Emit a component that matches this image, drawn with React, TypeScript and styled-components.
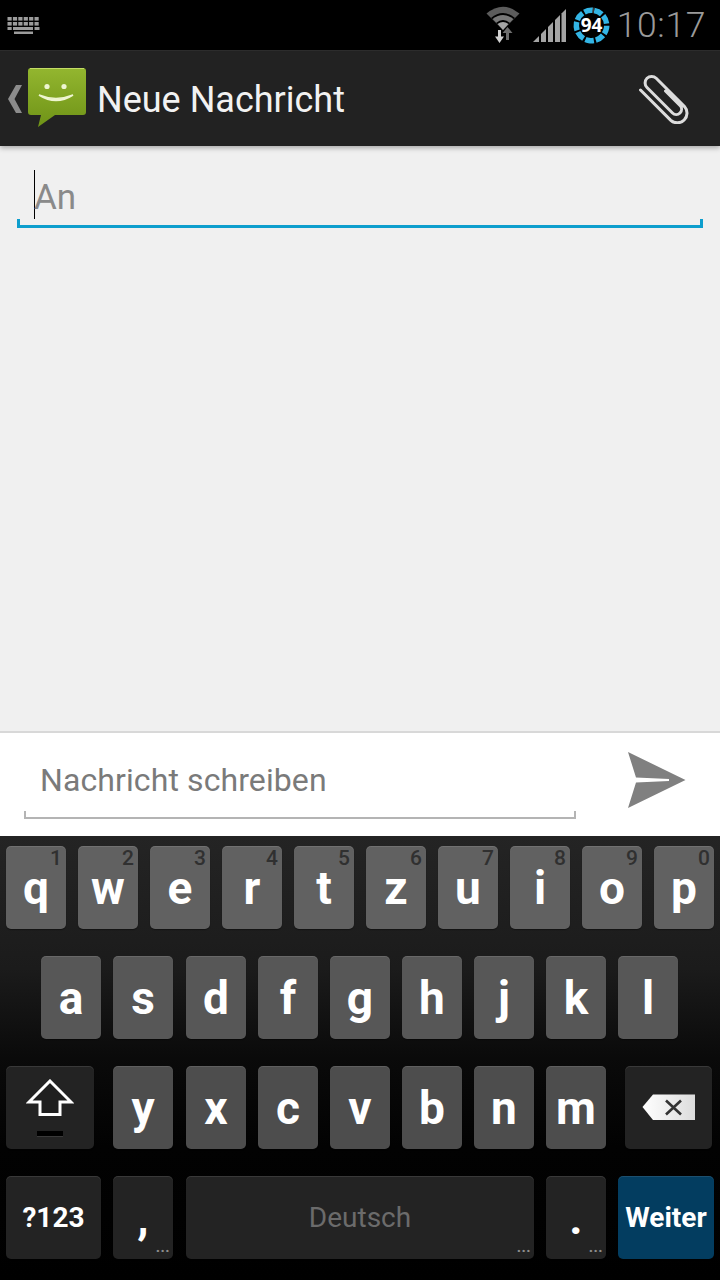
import { styled, createGlobalStyle } from 'styled-components';

type KeyKind = 'letter' | 'dark' | 'action';

const rowOne = [
	['q', '1'],
	['w', '2'],
	['e', '3'],
	['r', '4'],
	['t', '5'],
	['z', '6'],
	['u', '7'],
	['i', '8'],
	['o', '9'],
	['p', '0'],
];
const rowTwo = ['a', 's', 'd', 'f', 'g', 'h', 'j', 'k', 'l'];
const rowThree = ['y', 'x', 'c', 'v', 'b', 'n', 'm'];

function KeyboardIcon() {
	const top = [0, 1, 2, 3, 4, 5];
	return (
		<svg width="33" height="17" viewBox="0 0 33 17" fill="#9c9c9c">
			{top.map((i) => (
				<rect key={i} x={0.5 + i * 5.4} y="0" width="4.2" height="3.6" />
			))}
			{top.map((i) => (
				<rect key={i} x={0.5 + i * 5.4} y="5" width="4.2" height="3.6" />
			))}
			<rect x="0.5" y="10" width="4.2" height="3" />
			<rect x="6" y="10" width="20" height="3" />
			<rect x="27.5" y="10" width="5" height="3" />
			<rect x="7" y="14.5" width="19" height="2.5" />
		</svg>
	);
}

function WifiIcon() {
	return (
		<svg width="40" height="38" viewBox="0 0 40 38">
			<path d="M0.5 7.5 Q17 -6 33.5 7.5 L17 24 Z" fill="#5c5c5c" />
			<path d="M5 12 Q17 2 29 12 L17 24 Z" fill="#000" />
			<path d="M6.5 13 Q17 5 27.5 13 L17 24 Z" fill="#787878" />
			<path d="M10 17 Q17 11 24 17 L17 24 Z" fill="#000" />
			<path d="M11.5 18 Q17 14 22.5 18 L17 24 Z" fill="#a6a6a6" />
			<path d="M9 30.5 H12 V24 H15 V30.5 H18 L13.5 37 Z" fill="#d0d0d0" />
			<path d="M16.5 27 L21.5 21 L26.5 27 H23 V34 H20 V27 Z" fill="#6e6e6e" />
		</svg>
	);
}

function SignalIcon() {
	return (
		<svg width="33" height="33" viewBox="0 0 33 33" fill="#a4a4a4">
			<path d="M0 33 L6 27 V33 Z" />
			<path d="M8 25 L13 20 V33 H8 Z" />
			<path d="M15 18 L20 13 V33 H15 Z" />
			<path d="M22 11 L27 6 V33 H22 Z" />
			<path d="M28.5 4.5 L33 0 V33 H28.5 Z" />
		</svg>
	);
}

function BatteryRing() {
	const size = 37;
	const radius = 15.2;
	const length = 2 * Math.PI * radius;
	const part = length / 9;
	return (
		<svg width={size} height={size} viewBox="0 0 37 37">
			<g transform="rotate(-80 18.5 18.5)" fill="none" strokeWidth="5.5">
				<circle cx="18.5" cy="18.5" r={radius} stroke="#33b5e5" strokeDasharray={`${part - 2} 2`} />
				<circle
					cx="18.5"
					cy="18.5"
					r={radius}
					stroke="#3a3a3a"
					strokeDasharray={`${part * 0.55} ${length}`}
					strokeDashoffset={part * 0.76}
				/>
			</g>
			<text
				x="18.5"
				y="25.2"
				textAnchor="middle"
				fill="#fff"
				fontFamily="'Open Sans', sans-serif"
				fontWeight="700"
				fontSize="19"
			>
				94
			</text>
		</svg>
	);
}

function BackChevron() {
	return (
		<svg width="20" height="30" viewBox="0 0 20 30">
			<path d="M8 1 H14 L6.5 15 L14 29 H8 L0 15 Z" fill="#8c8c8c" />
		</svg>
	);
}

function MessagingLogo() {
	return (
		<svg width="60" height="62" viewBox="1 1 60 62">
			<defs>
				<linearGradient id="bubble" x1="0" y1="0" x2="0" y2="1">
					<stop offset="0" stopColor="#93b62f" />
					<stop offset="1" stopColor="#6f9317" />
				</linearGradient>
			</defs>
			<path
				d="M4 1 H56 Q59 1 59 4 V45 Q59 48 56 48 H28 L11 60 L14 48 H4 Q1 48 1 45 V4 Q1 1 4 1 Z"
				fill="url(#bubble)"
			/>
			<path d="M3 1.5 H57" stroke="#c4dc66" strokeWidth="1" />
			<circle cx="20" cy="19.5" r="2.6" fill="#eef5d0" />
			<circle cx="37" cy="19.5" r="2.6" fill="#eef5d0" />
			<path d="M12 28 Q29 39 46 28 Q29 35 12 28 Z" fill="#eef5d0" stroke="#eef5d0" strokeWidth="1.6" />
		</svg>
	);
}

function PaperclipIcon() {
	return (
		<svg width="54" height="50" viewBox="0 0 54 50">
			<path
				d="M29.5 17 L44 31.5 A5.3 5.3 0 0 1 36.5 39 L11 13.5 A6.5 6.5 0 0 1 20.2 4.3 L48.5 32.6 A9.7 9.7 0 0 1 34.8 46.3 L4.5 16"
				fill="none"
				stroke="#dcdcdc"
				strokeWidth="3"
				strokeLinecap="round"
			/>
		</svg>
	);
}

function SendIcon() {
	return (
		<svg width="58" height="56" viewBox="0 0 58 56">
			<path d="M0 0 L57.5 28 L0 56 L8 30.4 L41 29 V27 L8 25.6 Z" fill="#808080" />
		</svg>
	);
}

function ShiftIcon() {
	return (
		<svg width="48" height="58" viewBox="0 0 48 58">
			<path d="M24 2 L45 23 H34 V35.5 H14 V23 H3 Z" fill="#1f1f1f" stroke="#fff" strokeWidth="3" />
			<rect x="11" y="52" width="26" height="5" fill="#000" />
			<rect x="11" y="57" width="26" height="1" fill="#3a3a3a" />
		</svg>
	);
}

function DeleteIcon() {
	return (
		<svg width="54" height="27" viewBox="0 0 54 27">
			<defs>
				<linearGradient id="delete" x1="0" y1="0" x2="1" y2="0">
					<stop offset="0" stopColor="#ffffff" />
					<stop offset="1" stopColor="#dcdcdc" />
				</linearGradient>
			</defs>
			<path d="M0.5 13 L11 0.5 H53 V26 H11 Z" fill="url(#delete)" />
			<path d="M24 6.5 L39 20.5 M39 6.5 L24 20.5" stroke="#333" strokeWidth="2.6" />
		</svg>
	);
}

export default function App() {
	return (
		<>
			<GlobalStyle />
			<Screen>
				<StatusBar>
					<KeyboardIcon />
					<StatusRight>
						<WifiIcon />
						<SignalIcon />
						<BatteryRing />
						<Clock>10:17</Clock>
					</StatusRight>
				</StatusBar>
				<ActionBar>
					<BackChevron />
					<MessagingLogo />
					<Title>Neue Nachricht</Title>
					<PaperclipIcon />
				</ActionBar>
				<Recipients>
					<RecipientField>
						<Caret />
						<Placeholder>An</Placeholder>
					</RecipientField>
				</Recipients>
				<Composer>
					<MessageField>Nachricht schreiben</MessageField>
					<SendIcon />
				</Composer>
				<Keyboard>
					<KeyRow>
						{rowOne.map(([letter, hint]) => (
							<Key key={letter} $shade="#616161">
								{letter}
								<Hint>{hint}</Hint>
							</Key>
						))}
					</KeyRow>
					<OffsetRow>
						{rowTwo.map((letter) => (
							<Key key={letter} $shade="#575757">
								{letter}
							</Key>
						))}
					</OffsetRow>
					<KeyRow>
						<Key $width={88} $kind="dark" $after={7}>
							<ShiftIcon />
						</Key>
						{rowThree.map((letter) => (
							<Key key={letter} $shade="#4d4d4d" $after={letter === 'y' ? 1 : letter === 'm' ? 7 : 0}>
								{letter}
							</Key>
						))}
						<Key $width={87} $kind="dark">
							<DeleteIcon />
						</Key>
					</KeyRow>
					<KeyRow>
						<Key $width={95} $kind="dark">
							<SmallLabel>?123</SmallLabel>
						</Key>
						<Key $kind="dark" $after={1}>
							,<Dots>...</Dots>
						</Key>
						<SpaceKey $width={348} $kind="dark">
							Deutsch
							<Dots>...</Dots>
						</SpaceKey>
						<Key $kind="dark">
							.<Dots>...</Dots>
						</Key>
						<Key $width={96} $kind="action">
							<SmallLabel>Weiter</SmallLabel>
						</Key>
					</KeyRow>
				</Keyboard>
			</Screen>
		</>
	);
}

const GlobalStyle = createGlobalStyle`
	html, body {
		margin: 0;
		padding: 0;
		background: #000;
	}
`;

const Screen = styled.div`
	width: 720px;
	height: 1280px;
	display: flex;
	flex-direction: column;
	overflow: hidden;
	font-family: Roboto, 'Liberation Sans', sans-serif;
	background: #f0f0f0;
`;

const StatusBar = styled.div`
	height: 50px;
	flex: none;
	display: flex;
	align-items: center;
	justify-content: space-between;
	padding: 0 14px 0 7px;
	background: #000;
	box-sizing: border-box;
`;

const StatusRight = styled.div`
	display: flex;
	align-items: center;
	gap: 7px;
`;

const Clock = styled.span`
	font-size: 35.5px;
	font-weight: 300;
	color: #9a9a9a;
	letter-spacing: 0.6px;
`;

const ActionBar = styled.div`
	height: 96px;
	flex: none;
	display: flex;
	align-items: center;
	padding: 0 30px 0 8px;
	box-sizing: border-box;
	background: #222;
	border-top: 1px solid #2c2c2c;
	box-shadow: 0 2px 5px rgba(0, 0, 0, 0.3);
	z-index: 1;
`;

const Title = styled.h1`
	flex: 1;
	margin: 2px 0 0 9px;
	font-size: 36px;
	font-weight: 400;
	color: #f2f2f2;
`;

const Recipients = styled.div`
	flex: 1;
	padding: 24px 17px 0;
`;

const RecipientField = styled.div`
	height: 58px;
	box-sizing: border-box;
	display: flex;
	align-items: flex-start;
	padding-left: 17px;
	background:
		linear-gradient(#0d9ecd, #0d9ecd) left bottom / 100% 3px no-repeat,
		linear-gradient(#0d9ecd, #0d9ecd) left bottom / 3px 9px no-repeat,
		linear-gradient(#0d9ecd, #0d9ecd) right bottom / 3px 9px no-repeat;
`;

const Caret = styled.span`
	width: 1px;
	height: 49px;
	background: #000;
`;

const Placeholder = styled.span`
	font-size: 35px;
	line-height: 55px;
	margin-left: -1px;
	color: #8a8a8a;
`;

const Composer = styled.div`
	height: 105px;
	flex: none;
	box-sizing: border-box;
	display: flex;
	align-items: center;
	gap: 52px;
	padding: 0 0 10px 24px;
	background: #fff;
	border-top: 2px solid #d8d8d8;
`;

const MessageField = styled.div`
	width: 552px;
	height: 78px;
	box-sizing: border-box;
	padding: 19px 0 0 16px;
	font-size: 32px;
	letter-spacing: 0.1px;
	line-height: 40px;
	color: #7a7a7a;
	background:
		linear-gradient(#b4b4b4, #b4b4b4) left bottom / 100% 2px no-repeat,
		linear-gradient(#b4b4b4, #b4b4b4) left bottom / 2px 8px no-repeat,
		linear-gradient(#b4b4b4, #b4b4b4) right bottom / 2px 8px no-repeat;
`;

const Keyboard = styled.div`
	height: 444px;
	flex: none;
	box-sizing: border-box;
	padding-top: 10px;
	display: flex;
	flex-direction: column;
	gap: 27px;
	background: linear-gradient(#242424 0, #1b1b1b 30%, #0a0a0a 50%, #020202 70%, #000 100%);
`;

const KeyRow = styled.div`
	display: flex;
	gap: 12px;
	padding-left: 6px;
`;

const OffsetRow = styled(KeyRow)`
	padding-left: 41px;

	& > :nth-child(2) {
		margin-right: 1px;
	}
`;

const keyBackground = (kind: KeyKind, shade: string) => {
	if (kind === 'action') return '#033d60';
	if (kind === 'dark') return '#232323';
	return shade;
};

const Key = styled.div<{ $width?: number; $kind?: KeyKind; $shade?: string; $after?: number }>`
	position: relative;
	width: ${({ $width }) => $width ?? 60}px;
	height: 83px;
	flex: none;
	box-sizing: border-box;
	display: flex;
	align-items: center;
	justify-content: center;
	margin-right: ${({ $after }) => $after ?? 0}px;
	border-radius: 5px;
	font-size: 46px;
	font-weight: 700;
	line-height: 40px;
	color: #fff;
	background: ${({ $kind, $shade }) => keyBackground($kind ?? 'letter', $shade ?? '#555')};
	box-shadow:
		inset 0 1px 0 rgba(255, 255, 255, 0.1),
		0 1px 1px rgba(0, 0, 0, 0.4);
`;

const SpaceKey = styled(Key)`
	font-size: 28px;
	font-weight: 400;
	color: #6b6b6b;
`;

const SmallLabel = styled.span`
	font-size: 28px;
	font-weight: 700;
`;

const Hint = styled.span`
	position: absolute;
	top: 4px;
	right: 4px;
	font-size: 21px;
	font-weight: 500;
	line-height: 16px;
	color: #303030;
`;

const Dots = styled.span`
	position: absolute;
	right: 3px;
	bottom: 4px;
	font-size: 15px;
	font-weight: 700;
	line-height: 1;
	letter-spacing: 0.4px;
	color: #8e8e8e;
`;
